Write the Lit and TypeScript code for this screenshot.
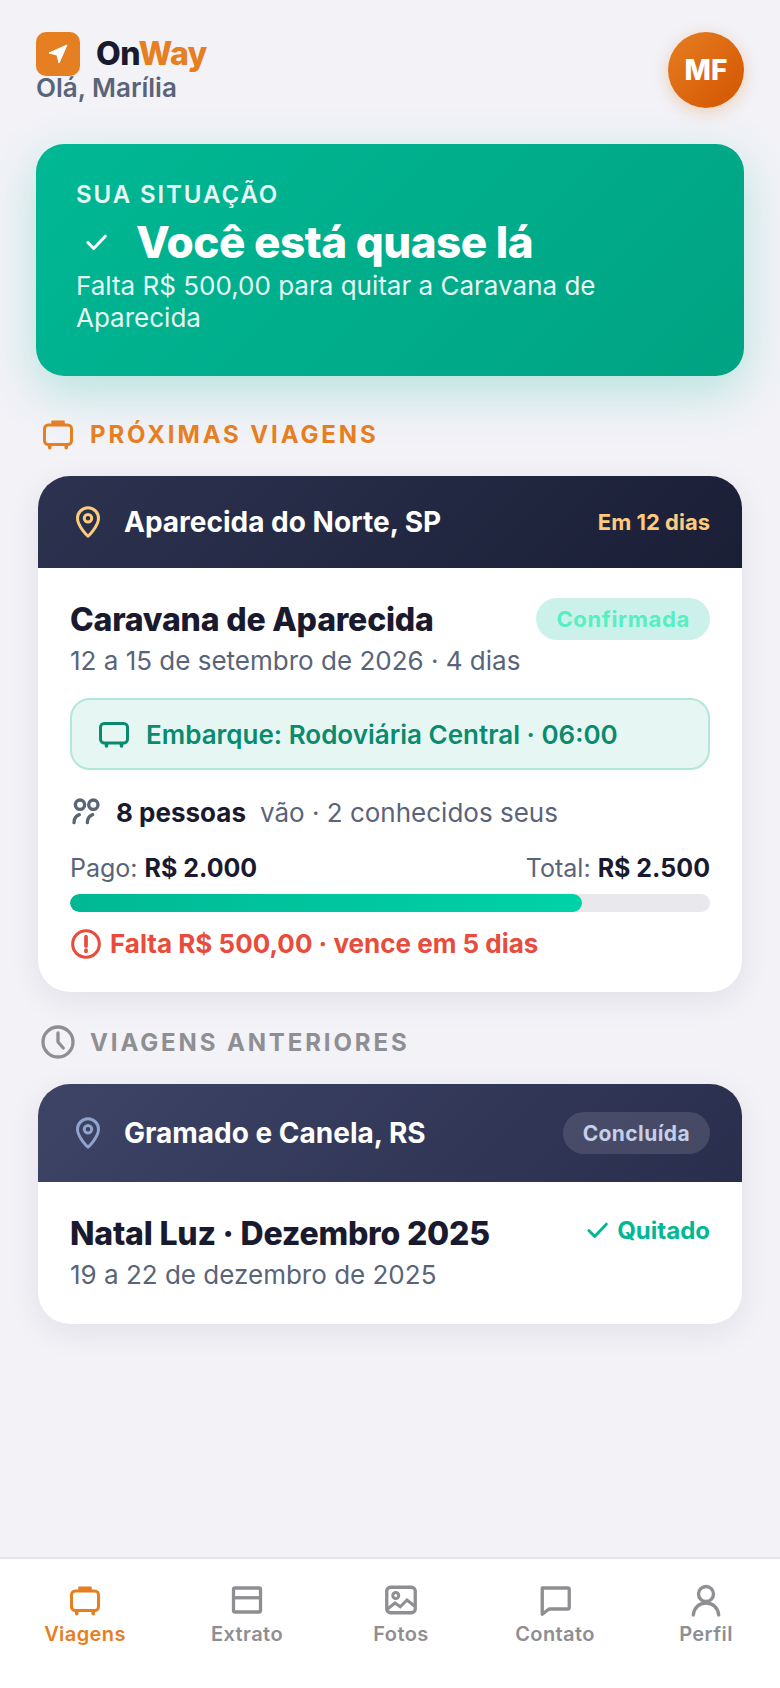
import { LitElement, html, css, svg } from "lit";
import { customElement } from "lit/decorators.js";

const bus = svg`<rect x="3" y="6" width="18" height="13" rx="2.5" fill="none" stroke="currentColor" stroke-width="2"/><path d="M8 3.5h8v2.5H8z" fill="currentColor" stroke="currentColor" stroke-width="1" stroke-linejoin="round"/><path d="M6.5 19.5v1.6M17.5 19.5v1.6" stroke="currentColor" stroke-width="2.4" stroke-linecap="round"/>`;
const busNoHandle = svg`<rect x="3" y="5" width="18" height="13" rx="2.5" fill="none" stroke="currentColor" stroke-width="2"/><path d="M7 18.5v1.5M17 18.5v1.5" stroke="currentColor" stroke-width="2.4" stroke-linecap="round"/>`;
const pin = svg`<path d="M12 21.5s-7-6.6-7-12a7 7 0 0 1 14 0c0 5.400-7 12-7 12z" fill="none" stroke="currentColor" stroke-width="2" stroke-linejoin="round"/><circle cx="12" cy="9.500" r="2.500" fill="none" stroke="currentColor" stroke-width="2"/>`;
const check = svg`<path d="M5 12.500l5 5L20 7" fill="none" stroke="currentColor" stroke-width="2.500" stroke-linecap="round" stroke-linejoin="round"/>`;

@customElement("app-root")
export class AppRoot extends LitElement {
  static styles = css`
    :host { display: block; font-family: Inter, "Noto Sans", sans-serif; color: #1a1a2e; }
    * { box-sizing: border-box; }
    svg { display: block; flex: none; }
    .screen { min-height: 1688px; background: #f2f2f7; display: flex; flex-direction: column; }
    main { flex: 1; padding: 32px 36px 0; }
    .top { display: flex; justify-content: space-between; align-items: flex-start; height: 76px; }
    .brand { display: flex; align-items: center; gap: 16px; height: 44px; }
    .logo { width: 44px; height: 44px; border-radius: 10px; background: #e67e22; display: flex; align-items: center; justify-content: center; color: #fff; }
    .name { font-size: 32px; font-weight: 800; letter-spacing: -0.5px; line-height: 44px; }
    .name span { color: #e67e22; }
    .hello { font-size: 26px; font-weight: 600; color: #5a6478; line-height: 32px; margin-top: -4px; }
    .avatar { width: 76px; height: 76px; border-radius: 50%; background: linear-gradient(135deg, #e67e22, #d35400); color: #fff; font-size: 28px; font-weight: 800; display: flex; align-items: center; justify-content: center; box-shadow: 0 4px 16px rgba(230,126,34,.3); }
    .status { margin-top: 36px; height: 232px; border-radius: 28px; background: linear-gradient(135deg, #00b894, #00a383); padding: 36px 40px; color: #fff; box-shadow: 0 16px 48px rgba(0,184,148,.25); }
    .eyebrow { font-size: 24px; font-weight: 600; letter-spacing: 1.92px; line-height: 30px; opacity: .9; }
    .title { display: flex; align-items: center; gap: 20px; font-size: 44px; font-weight: 800; letter-spacing: -0.5px; line-height: 56px; margin-top: 4px; }
    .tick { width: 40px; height: 40px; display: flex; justify-content: center; align-items: center; margin-left: 0; }
    .sub { font-size: 26px; line-height: 32px; opacity: .9; }
    .section { display: flex; align-items: center; gap: 14px; margin-top: 40px; margin-left: 4px; height: 36px; font-size: 24px; font-weight: 700; letter-spacing: 2.88px; color: #e67e22; }
    .section.past { color: #8e8e93; margin-top: 32px; }
    .card { margin: 24px 2px 0; background: #fff; border-radius: 32px; overflow: hidden; box-shadow: 0 8px 32px rgba(26,26,46,.08); }
    .head { display: flex; align-items: center; gap: 18px; padding: 0 32px; height: 92px; background: linear-gradient(135deg, #2d3250, #1a1f36); color: #fff; }
    .head.past { height: 98px; background: linear-gradient(135deg, #3d4466, #2a2e4d); }
    .place { flex: 1; font-size: 28px; font-weight: 700; }
    .pin { color: #fdcb7e; }
    .pin.past { color: #8fa3cc; }
    .when { font-size: 22px; font-weight: 700; color: #fdcb7e; }
    .done { background: rgba(255,255,255,.12); color: #c5d0e8; font-size: 21px; font-weight: 700; letter-spacing: .4px; padding: 0 20px; height: 42px; border-radius: 21px; display: flex; align-items: center; }
    .body { padding: 30px 32px 32px; }
    .row { display: flex; justify-content: space-between; align-items: flex-start; }
    .trip { font-size: 32px; font-weight: 800; line-height: 44px; letter-spacing: -0.2px; }
    .pill { background: rgba(0,184,148,.2); color: #55efc4; font-size: 22px; font-weight: 700; letter-spacing: .66px; height: 42px; padding: 0 20px; border-radius: 21px; display: flex; align-items: center; }
    .date { font-size: 26px; color: #5a6478; line-height: 34px; margin-top: 2px; }
    .board { margin-top: 20px; height: 72px; border: 2px solid #b2e8da; background: #e6f7f3; border-radius: 20px; display: flex; align-items: center; gap: 14px; padding: 0 24px; color: #0a8a6e; font-size: 26px; font-weight: 600; }
    .people { display: flex; align-items: center; margin-top: 22px; height: 40px; font-size: 26px; color: #5a6478; }
    .people svg { margin-right: 14px; }
    .people b { color: #1a1a2e; font-weight: 700; margin-right: 14px; }
    .money { display: flex; justify-content: space-between; margin-top: 20px; font-size: 25px; line-height: 32px; color: #5a6478; }
    .money b { color: #1a1a2e; font-weight: 700; }
    .bar { height: 18px; border-radius: 9px; background: #e8e8ed; margin-top: 10px; overflow: hidden; }
    .fill { height: 100%; border-radius: 9px; background: linear-gradient(90deg, #00b894, #00d2a8); }
    .warn { display: flex; align-items: center; gap: 8px; margin-top: 16px; color: #e74c3c; font-size: 26px; font-weight: 700; line-height: 32px; }
    .paid { display: flex; align-items: center; gap: 6px; color: #00b894; font-size: 24px; font-weight: 700; height: 36px; }
    nav { height: 131px; background: #fff; border-top: 2px solid #e5e5ea; display: grid; grid-template-columns: 170px 154px 154px 154px 148px; padding-bottom: 20px; }
    .tab { display: flex; flex-direction: column; align-items: center; justify-content: center; gap: 4px; color: #8e8e93; font-size: 20px; font-weight: 600; letter-spacing: .4px; }
    .tab.on { color: #e67e22; }
  `;

  render() {
    const tabs = [
      ["Viagens", bus, true],
      ["Extrato", svg`<rect x="3" y="4" width="18" height="16" rx="1" fill="none" stroke="currentColor" stroke-width="2.2"/><path d="M3 10.500h18" stroke="currentColor" stroke-width="2.200"/>`, false],
      ["Fotos", svg`<rect x="2.500" y="3.500" width="19" height="17" rx="2.500" fill="none" stroke="currentColor" stroke-width="2.200"/><circle cx="8.500" cy="9" r="2" fill="none" stroke="currentColor" stroke-width="2"/><path d="M3 18l5-4 3.500 2.500L16 12l5 4" fill="none" stroke="currentColor" stroke-width="2"/>`, false],
      ["Contato", svg`<path d="M3.500 4h17a1 1 0 0 1 1 1v12a1 1 0 0 1-1 1H8l-4.500 3.500V4z" fill="none" stroke="currentColor" stroke-width="2.200" stroke-linejoin="round"/>`, false],
      ["Perfil", svg`<circle cx="12" cy="8" r="5" fill="none" stroke="currentColor" stroke-width="2.200"/><path d="M3.500 22c.5-5 4-8 8.500-8s8 3 8.500 8" fill="none" stroke="currentColor" stroke-width="2.200" stroke-linecap="round"/>`, false],
    ] as const;
    return html`<div class="screen">
      <main>
        <div class="top">
          <div>
            <div class="brand">
              <div class="logo"><svg width="24" height="24" viewBox="0 0 24 24"><path d="M21 3L3 11l8 2 2 8z" fill="currentColor" stroke="currentColor" stroke-linejoin="round"/></svg></div>
              <div class="name">On<span>Way</span></div>
            </div>
            <div class="hello">Olá, Marília</div>
          </div>
          <div class="avatar">MF</div>
        </div>
        <div class="status">
          <div class="eyebrow">SUA SITUAÇÃO</div>
          <div class="title"><div class="tick"><svg width="28" height="28" viewBox="0 0 24 24">${check}</svg></div>Você está quase lá</div>
          <div class="sub">Falta R$ 500,00 para quitar a Caravana de Aparecida</div>
        </div>
        <div class="section"><svg width="36" height="36" viewBox="0 0 24 24">${bus}</svg>PRÓXIMAS VIAGENS</div>
        <div class="card">
          <div class="head"><svg class="pin" width="36" height="36" viewBox="0 0 24 24">${pin}</svg><div class="place">Aparecida do Norte, SP</div><div class="when">Em 12 dias</div></div>
          <div class="body">
            <div class="row"><div class="trip">Caravana de Aparecida</div><div class="pill">Confirmada</div></div>
            <div class="date">12 a 15 de setembro de 2026 · 4 dias</div>
            <div class="board"><svg width="36" height="36" viewBox="0 0 24 24">${busNoHandle}</svg>Embarque: Rodoviária Central · 06:00</div>
            <div class="people"><svg width="32" height="32" viewBox="0 0 24 24" fill="none" stroke="currentColor" stroke-width="2.500" stroke-linecap="round"><circle cx="7.500" cy="6.500" r="3.500"/><circle cx="17.500" cy="6.500" r="3.500"/><path d="M3 20c0-3 1-5 4-6M13 20c0-3 1-5 4-6"/></svg><b>8 pessoas</b>vão · 2 conhecidos seus</div>
            <div class="money"><div>Pago: <b>R$ 2.000</b></div><div>Total: <b>R$ 2.500</b></div></div>
            <div class="bar"><div class="fill" style="width:80%"></div></div>
            <div class="warn"><svg width="32" height="32" viewBox="0 0 24 24" fill="none" stroke="currentColor" stroke-width="2.300"><circle cx="12" cy="12" r="10"/><path d="M12 6.500v7M12 16.500v1" stroke-width="2.800" stroke-linecap="round"/></svg>Falta R$ 500,00 · vence em 5 dias</div>
          </div>
        </div>
        <div class="section past"><svg width="36" height="36" viewBox="0 0 24 24" fill="none" stroke="currentColor" stroke-width="2.200" stroke-linecap="round"><circle cx="12" cy="12" r="10"/><path d="M12 6v6l3.500 4"/></svg>VIAGENS ANTERIORES</div>
        <div class="card">
          <div class="head past"><svg class="pin past" width="36" height="36" viewBox="0 0 24 24">${pin}</svg><div class="place">Gramado e Canela, RS</div><div class="done">Concluída</div></div>
          <div class="body">
            <div class="row"><div class="trip">Natal Luz · Dezembro 2025</div><div class="paid"><svg width="28" height="28" viewBox="0 0 24 24">${check}</svg>Quitado</div></div>
            <div class="date">19 a 22 de dezembro de 2025</div>
          </div>
        </div>
      </main>
      <nav>
        ${tabs.map(([label, icon, on]) => html`<div class="tab ${on ? "on" : ""}"><svg width="36" height="36" viewBox="0 0 24 24">${icon}</svg>${label}</div>`)}
      </nav>
    </div>`;
  }
}
